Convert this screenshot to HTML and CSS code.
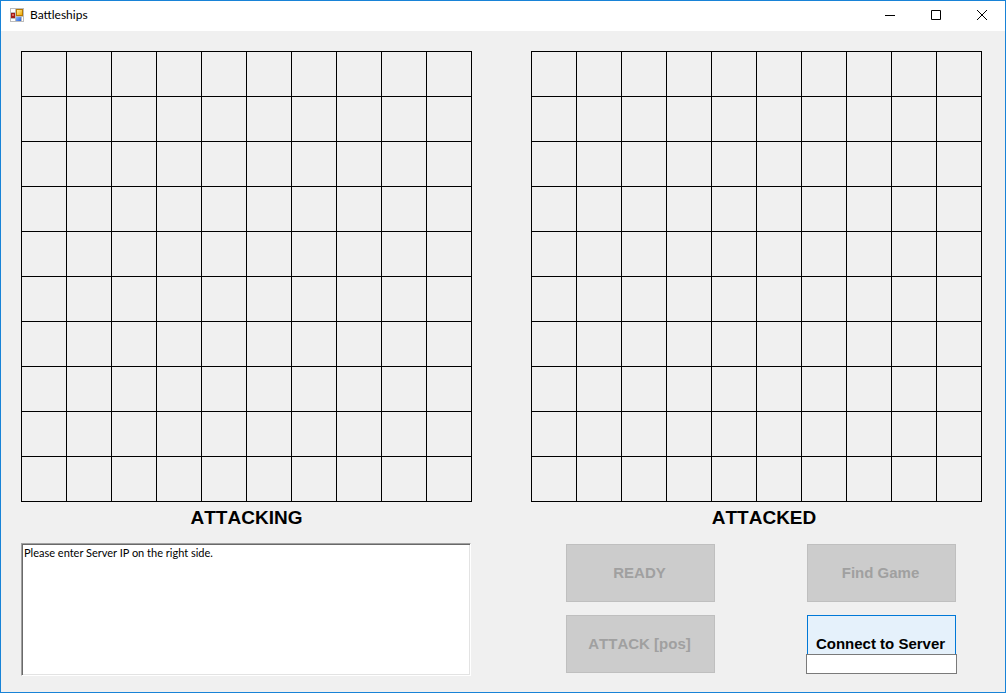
FILE: index.html
```html
<!DOCTYPE html>
<html lang="en">
<head>
<meta charset="utf-8">
<title>Battleships</title>
<link rel="stylesheet" href="styles.css">
</head>
<body>
<div class="window">
  <header class="titlebar">
    <svg class="app-icon" width="14" height="14" viewBox="0 0 14 14" shape-rendering="crispEdges" aria-hidden="true">
      <defs>
        <linearGradient id="gold" x1="0" y1="0" x2="1" y2="1"><stop offset="0" stop-color="#fff0a0"/><stop offset="1" stop-color="#f0a800"/></linearGradient>
        <linearGradient id="blue" x1="0" y1="0" x2="1" y2="1"><stop offset="0" stop-color="#8ab8ff"/><stop offset="1" stop-color="#2a62d8"/></linearGradient>
      </defs>
      <path fill="#bcbcbc" d="M0 0h14v14H0z"/>
      <path fill="#fff" d="M1 1h4v3H1zM1 11h4v2H1zM12 9h1v4h-1z"/>
      <path fill="#a01c18" d="M1 5h4v5H1z"/>
      <path fill="#e0645c" d="M2 6h2v2H2z"/>
      <path fill="#b87800" d="M6 1h7v7H6z"/>
      <path fill="url(#gold)" d="M7 2h5v5H7z"/>
      <path fill="url(#blue)" d="M6 9h5v4H6z"/>
    </svg>
    <h1 class="title">Battleships</h1>
    <div class="caption-buttons">
      <button class="caption" type="button" aria-label="Minimize"><svg width="10" height="10" viewBox="0 0 10 10"><path d="M0 5.5h10"/></svg></button>
      <button class="caption" type="button" aria-label="Maximize"><svg width="10" height="10" viewBox="0 0 10 10"><path d="M.5.5h9v9h-9z"/></svg></button>
      <button class="caption" type="button" aria-label="Close"><svg width="10" height="10" viewBox="0 0 10 10"><path d="M0 0l10 10M10 0L0 10"/></svg></button>
    </div>
  </header>
  <main class="content">
    <section class="side">
      <div class="board"></div>
      <h2 class="board-name">ATTACKING</h2>
      <textarea class="log" aria-label="Messages" readonly>Please enter Server IP on the right side.</textarea>
    </section>
    <section class="side">
      <div class="board"></div>
      <h2 class="board-name attacked">ATTACKED</h2>
      <div class="controls">
        <button class="action" type="button" disabled>READY</button>
        <button class="action" type="button" disabled>Find Game</button>
        <button class="action" type="button" disabled>ATTACK [pos]</button>
        <div class="connect">
          <button class="action" type="button">Connect to Server</button>
          <input class="server-ip" type="text" aria-label="Server IP">
        </div>
      </div>
    </section>
  </main>
</div>
<script src="board.js"></script>
</body>
</html>
```
FILE: styles.css
```css
* {
  box-sizing: border-box;
}

body {
  margin: 0;
  font-family: "Liberation Sans", Arial, sans-serif;
  font-kerning: none;
  color: #000;
}

.window {
  min-height: 100vh;
  border: 1px solid #1883d7;
  background: #f0f0f0;
}

.titlebar {
  display: flex;
  align-items: center;
  height: 30px;
  padding: 0 0 2px 9px;
  background: #fff;
}

.title {
  margin: 0 0 0 6px;
  font: 400 12px/16px Lato, sans-serif;
}

.caption-buttons {
  display: flex;
  align-self: stretch;
  margin-left: auto;
}

.caption {
  display: flex;
  align-items: center;
  justify-content: center;
  width: 46px;
  padding: 0;
  border: 0;
  background: none;
}

.caption path {
  fill: none;
  stroke: #000;
}

.content {
  display: grid;
  grid-template-columns: 1fr 1fr;
  gap: 59px;
  padding: 20px 23px 16px 20px;
}

.board {
  display: grid;
  grid-template-columns: repeat(10, 1fr);
  gap: 1px;
  border: 1px solid #000;
  background: #000;
}

.cell {
  aspect-ratio: 1;
  background: #f0f0f0;
}

.board-name {
  margin: 0 0 9px;
  font-size: 19px;
  font-weight: 700;
  line-height: 32px;
  text-align: center;
}

.attacked {
  padding-left: 15px;
}

.log {
  display: block;
  width: calc(100% - 1px);
  height: 133px;
  padding: 2px;
  border: 1px solid;
  border-color: #a0a0a0 #fff #fff #a0a0a0;
  background: #fff;
  box-shadow: inset 1px 1px #696969, inset -1px -1px #e3e3e3;
  color: #000;
  font: 11px/14px Lato, sans-serif;
  resize: none;
  outline: 0;
}

.controls {
  display: grid;
  grid-template-columns: 1fr 1fr;
  gap: 13px 92px;
  padding: 1px 26px 0 35px;
}

.action {
  display: block;
  width: 100%;
  height: 58px;
  padding: 0 2px 0 0;
  border: 1px solid #0078d7;
  background: #e5f1fb;
  color: #000;
  font: 700 15px/18px "Liberation Sans", Arial, sans-serif;
  font-kerning: none;
  white-space: nowrap;
}

.action:disabled {
  border-color: #bfbfbf;
  background: #ccc;
  color: #a0a0a0;
}

.connect {
  position: relative;
}

.server-ip {
  position: absolute;
  right: -1px;
  bottom: -1px;
  left: -1px;
  width: calc(100% + 2px);
  height: 20px;
  padding: 0 3px;
  border: 1px solid #7a7a7a;
  background: #fff;
  font: 11px/14px Lato, sans-serif;
}
```
FILE: board.js
```js
document.querySelectorAll(".board").forEach((board) => {
  for (let i = 0; i < 100; i += 1) {
    const cell = document.createElement("div");
    cell.className = "cell";
    board.append(cell);
  }
});
```
